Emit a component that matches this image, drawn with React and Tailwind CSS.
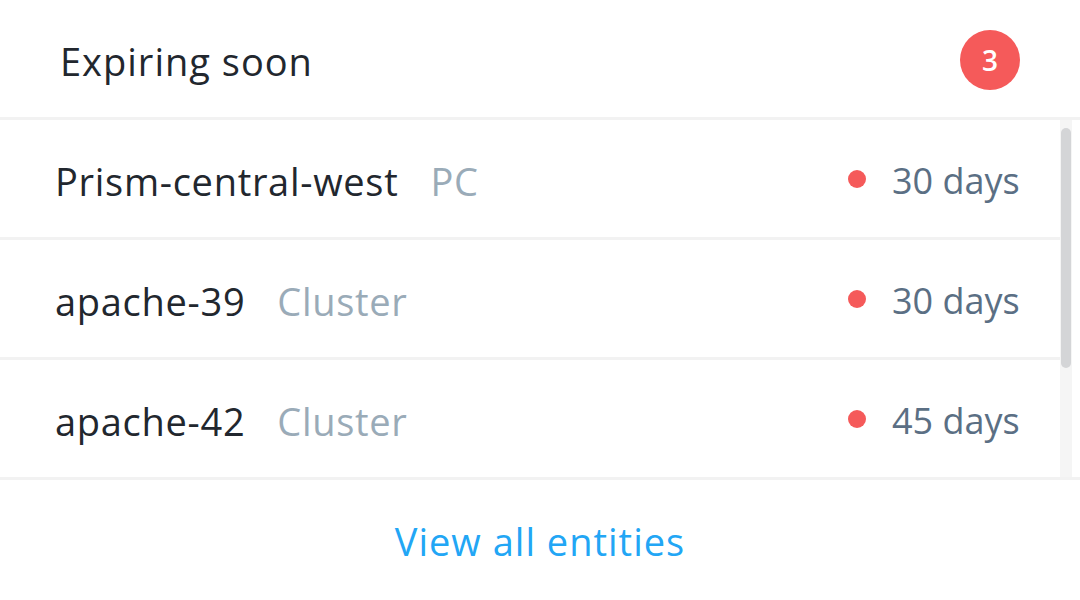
const entities = [
  { name: "Prism-central-west", type: "PC", days: "30 days" },
  { name: "apache-39", type: "Cluster", days: "30 days" },
  { name: "apache-42", type: "Cluster", days: "45 days" },
];

const EntityRow = ({ entity }) => (
  <div className="h-[120px] shrink-0 flex items-center justify-between pl-[55px] pr-[42px] border-b-[3px] border-[#f2f2f2]">
    <div className="flex items-baseline gap-[32px] whitespace-nowrap tracking-[0.7px] mt-[4px]">
      <span className="text-[#22272e]">{entity.name}</span>
      <span className="text-[#9aabb8]">{entity.type}</span>
    </div>
    <div className="flex items-center gap-[26px] whitespace-nowrap">
      <span className="w-[18px] h-[18px] rounded-full bg-[#f55a5a]" />
      <span className="text-[#5b6f84] text-[36px] w-[126px] text-right mt-[4px]">
        {entity.days}
      </span>
    </div>
  </div>
);

export default function App() {
  return (
    <div
      className="w-[1080px] h-[600px] bg-white flex flex-col overflow-hidden text-[38px] leading-none"
      style={{ fontFamily: "'Open Sans', Lato, sans-serif", fontVariantLigatures: "none" }}
    >
      <div className="h-[120px] shrink-0 flex items-center justify-between pl-[60px] pr-[60px] border-b-[3px] border-[#f2f2f2]">
        <h1 className="text-[#22272e] font-normal tracking-[1px] mt-[4px]">Expiring soon</h1>
        <span className="w-[60px] h-[60px] rounded-full bg-[#f55a5a] text-white text-[28px] font-semibold flex items-center justify-center mt-[2px]">
          3
        </span>
      </div>

      <div className="h-[360px] shrink-0 flex border-b-[3px] border-[#f2f2f2]">
        <div className="flex-1 flex flex-col overflow-hidden">
          {entities.map((entity) => (
            <EntityRow key={entity.name} entity={entity} />
          ))}
        </div>
        <div className="w-[12px] mr-[8px] bg-[#f5f5f5] pt-[8px]">
          <div className="mx-auto w-[10px] h-[240px] rounded-full bg-[#d4d5d7]" />
        </div>
      </div>

      <div className="flex-1 flex items-center justify-center">
        <a href="#" className="text-[#22a6f5] tracking-[1px] mt-[2px]">
          View all entities
        </a>
      </div>
    </div>
  );
}
